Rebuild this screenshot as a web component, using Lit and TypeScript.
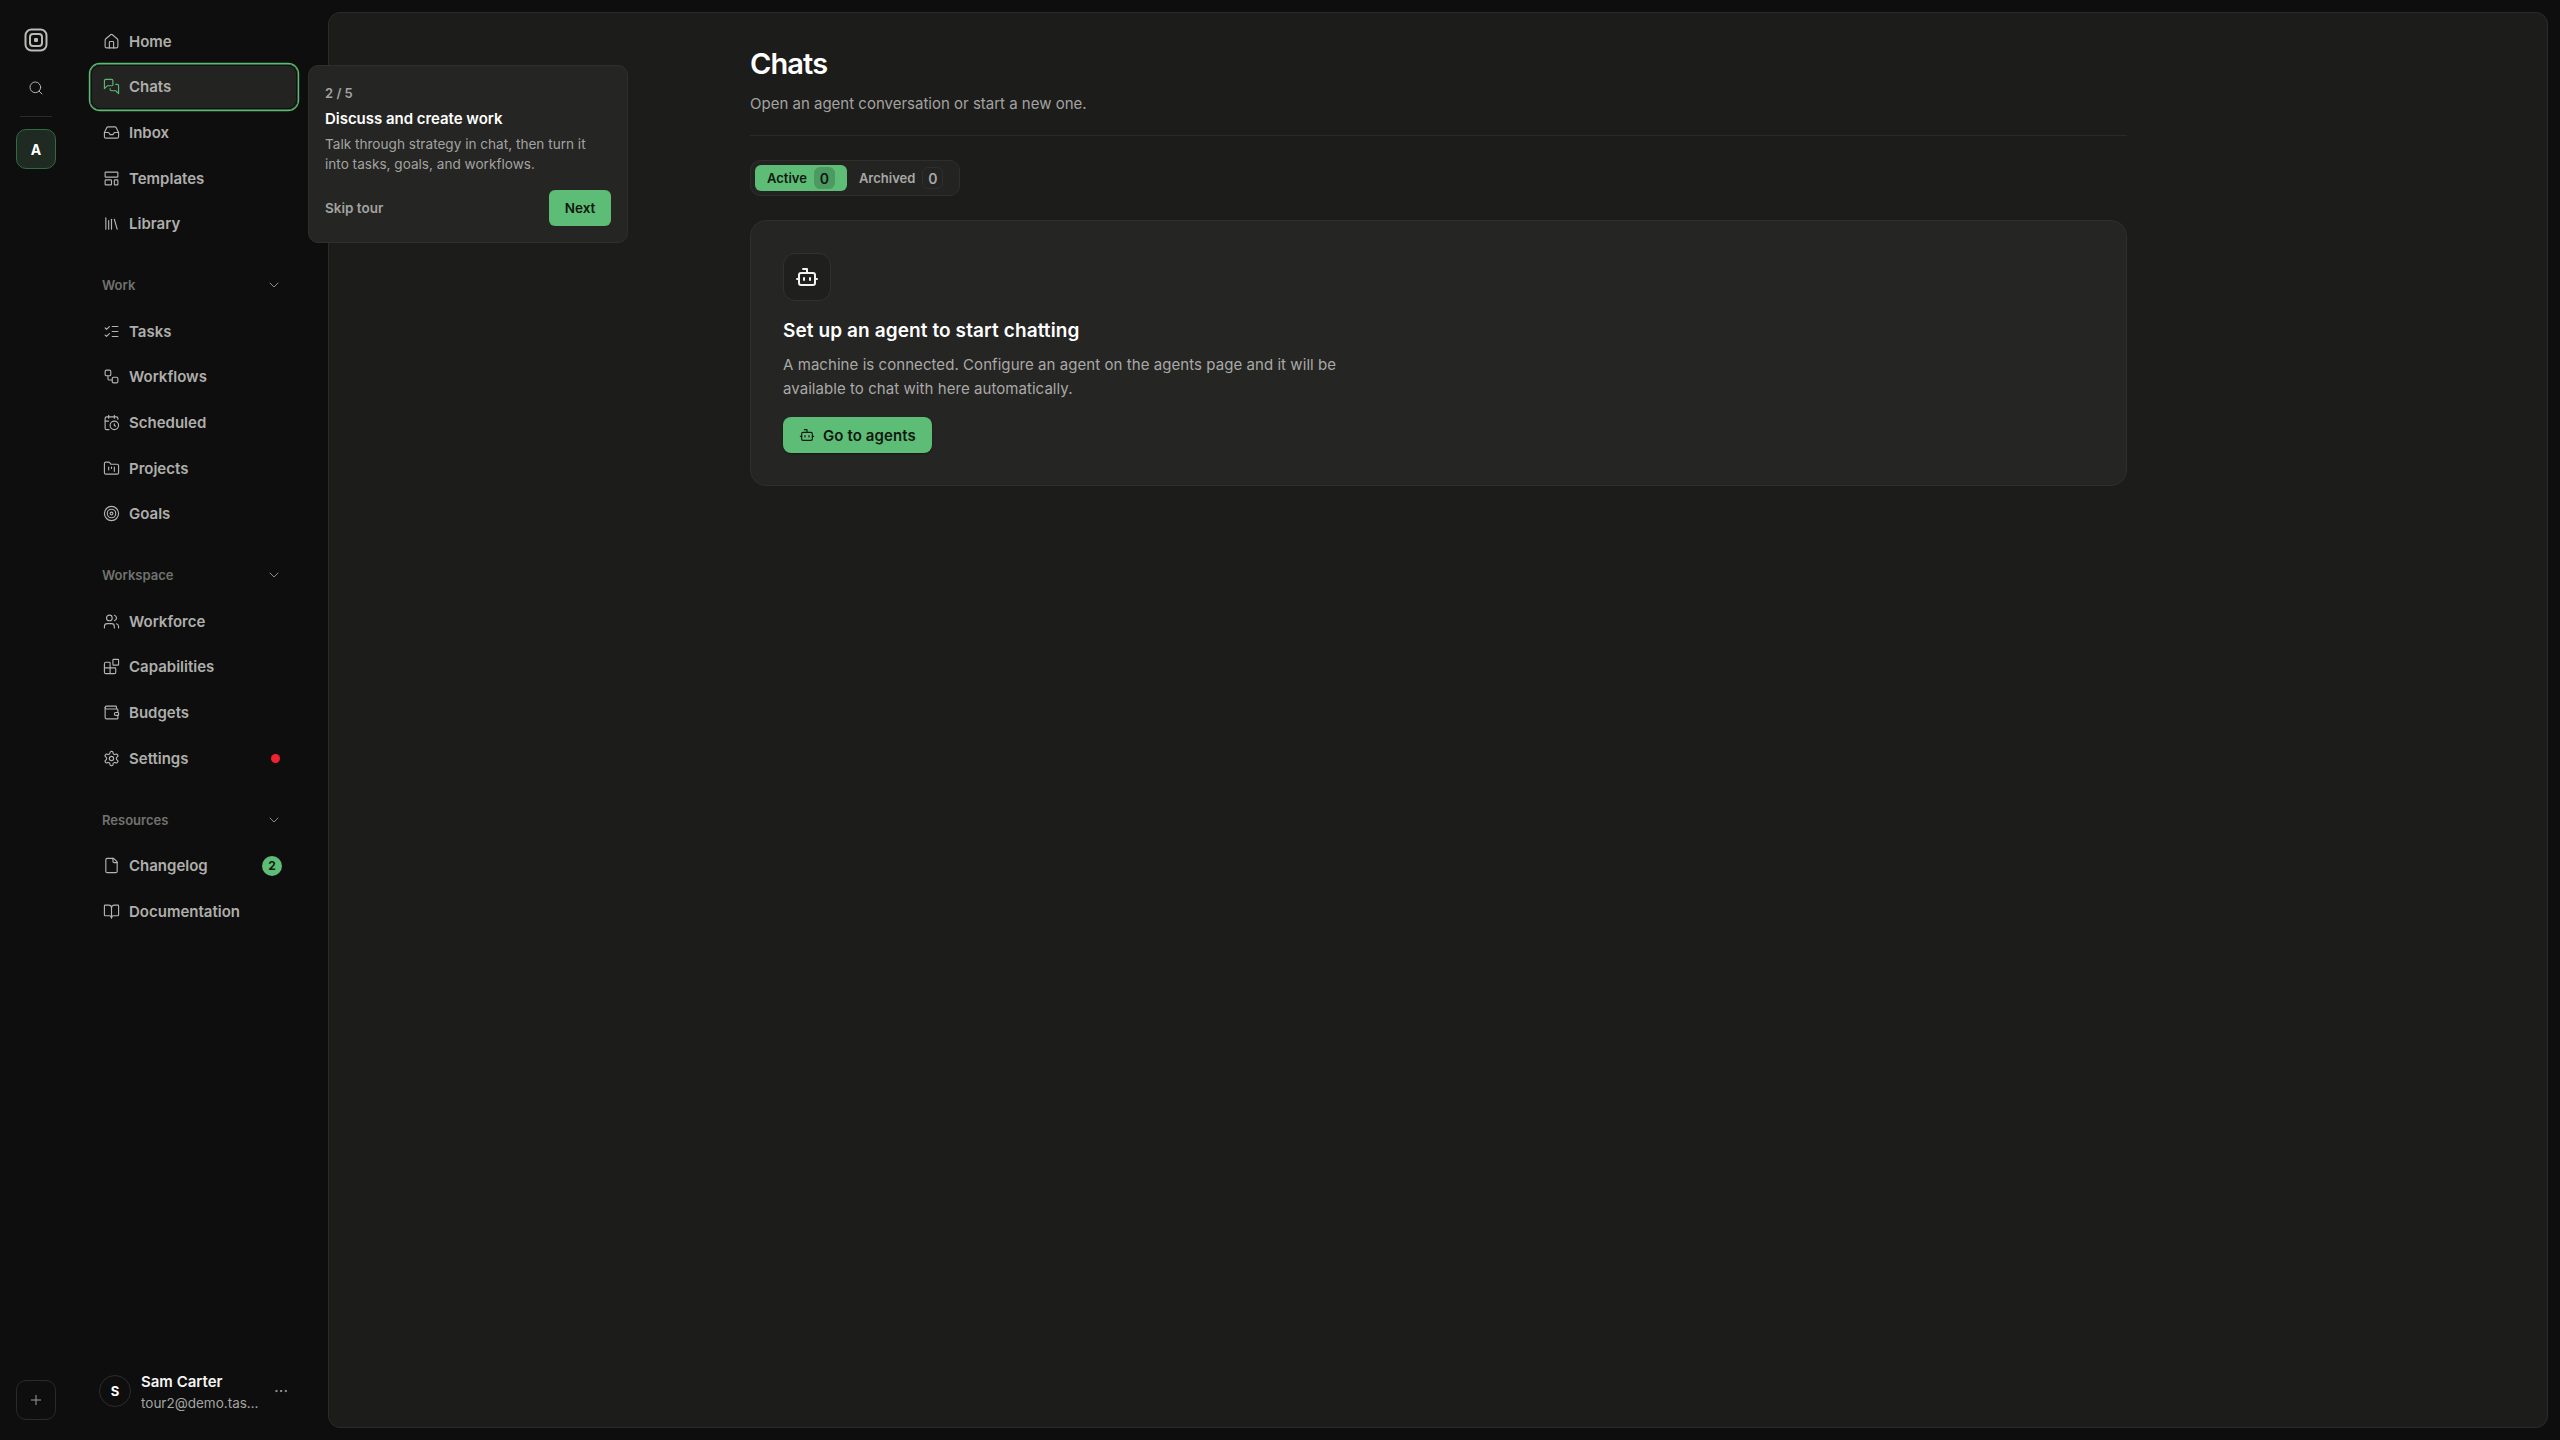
import { LitElement, html, svg, css } from 'lit';
import { customElement } from 'lit/decorators.js';

const icons: Record<string, unknown> = {
  home: svg`<path d="M15 21v-8a1 1 0 0 0-1-1h-4a1 1 0 0 0-1 1v8"/><path d="M3 10a2 2 0 0 1 .709-1.528l7-5.999a2 2 0 0 1 2.582 0l7 5.999A2 2 0 0 1 21 10v9a2 2 0 0 1-2 2H5a2 2 0 0 1-2-2z"/>`,
  chats: svg`<path d="M14 9a2 2 0 0 1-2 2H6l-4 4V4a2 2 0 0 1 2-2h8a2 2 0 0 1 2 2z"/><path d="M18 9h2a2 2 0 0 1 2 2v11l-4-4h-6a2 2 0 0 1-2-2v-1"/>`,
  inbox: svg`<polyline points="22 12 16 12 14 15 10 15 8 12 2 12"/><path d="M5.45 5.11 2 12v6a2 2 0 0 0 2 2h16a2 2 0 0 0 2-2v-6l-3.45-6.89A2 2 0 0 0 16.76 4H7.24a2 2 0 0 0-1.79 1.11z"/>`,
  templates: svg`<rect width="18" height="7" x="3" y="3" rx="1"/><rect width="9" height="7" x="3" y="14" rx="1"/><rect width="5" height="7" x="16" y="14" rx="1"/>`,
  library: svg`<path d="m16 6 4 14"/><path d="M12 6v14"/><path d="M8 8v12"/><path d="M4 4v16"/>`,
  tasks: svg`<path d="M13 5h8"/><path d="M13 12h8"/><path d="M13 19h8"/><path d="m3 17 2 2 4-4"/><path d="m3 7 2 2 4-4"/>`,
  workflows: svg`<rect width="8" height="8" x="3" y="3" rx="2"/><path d="M7 11v4a2 2 0 0 0 2 2h4"/><rect width="8" height="8" x="13" y="13" rx="2"/>`,
  scheduled: svg`<path d="M16 14v2.2l1.6 1"/><path d="M16 2v4"/><path d="M21 7.5V6a2 2 0 0 0-2-2H5a2 2 0 0 0-2 2v14a2 2 0 0 0 2 2h3.5"/><path d="M3 10h5"/><path d="M8 2v4"/><circle cx="16" cy="16" r="6"/>`,
  projects: svg`<path d="M4 20h16a2 2 0 0 0 2-2V8a2 2 0 0 0-2-2h-7.93a2 2 0 0 1-1.66-.9l-.82-1.2A2 2 0 0 0 7.93 3H4a2 2 0 0 0-2 2v13c0 1.1.9 2 2 2Z"/><path d="M8 10v4"/><path d="M12 10v2"/><path d="M16 10v6"/>`,
  goals: svg`<circle cx="12" cy="12" r="10"/><circle cx="12" cy="12" r="6"/><circle cx="12" cy="12" r="2"/>`,
  workforce: svg`<path d="M16 21v-2a4 4 0 0 0-4-4H6a4 4 0 0 0-4 4v2"/><circle cx="9" cy="7" r="4"/><path d="M22 21v-2a4 4 0 0 0-3-3.87"/><path d="M16 3.13a4 4 0 0 1 0 7.75"/>`,
  capabilities: svg`<path d="M10 22V7a1 1 0 0 0-1-1H4a2 2 0 0 0-2 2v12a2 2 0 0 0 2 2h12a2 2 0 0 0 2-2v-5a1 1 0 0 0-1-1H2"/><rect x="14" y="2" width="8" height="8" rx="1"/>`,
  budgets: svg`<path d="M19 7V4a1 1 0 0 0-1-1H5a2 2 0 0 0 0 4h15a1 1 0 0 1 1 1v4h-3a2 2 0 0 0 0 4h3a1 1 0 0 0 1-1v-2a1 1 0 0 0-1-1"/><path d="M3 5v14a2 2 0 0 0 2 2h15a1 1 0 0 0 1-1v-4"/>`,
  settings: svg`<path d="M12.22 2h-.44a2 2 0 0 0-2 2v.18a2 2 0 0 1-1 1.73l-.43.25a2 2 0 0 1-2 0l-.15-.08a2 2 0 0 0-2.73.73l-.22.38a2 2 0 0 0 .73 2.73l.15.1a2 2 0 0 1 1 1.72v.51a2 2 0 0 1-1 1.74l-.15.09a2 2 0 0 0-.73 2.73l.22.38a2 2 0 0 0 2.73.73l.15-.08a2 2 0 0 1 2 0l.43.25a2 2 0 0 1 1 1.73V20a2 2 0 0 0 2 2h.44a2 2 0 0 0 2-2v-.18a2 2 0 0 1 1-1.73l.43-.25a2 2 0 0 1 2 0l.15.08a2 2 0 0 0 2.73-.73l.22-.39a2 2 0 0 0-.73-2.73l-.15-.08a2 2 0 0 1-1-1.74v-.5a2 2 0 0 1 1-1.74l.15-.09a2 2 0 0 0 .73-2.73l-.22-.38a2 2 0 0 0-2.73-.73l-.15.08a2 2 0 0 1-2 0l-.43-.25a2 2 0 0 1-1-1.73V4a2 2 0 0 0-2-2z"/><circle cx="12" cy="12" r="3"/>`,
  changelog: svg`<path d="M15 2H6a2 2 0 0 0-2 2v16a2 2 0 0 0 2 2h12a2 2 0 0 0 2-2V7Z"/><path d="M14 2v4a2 2 0 0 0 2 2h4"/>`,
  documentation: svg`<path d="M12 7v14"/><path d="M3 18a1 1 0 0 1-1-1V4a1 1 0 0 1 1-1h5a4 4 0 0 1 4 4 4 4 0 0 1 4-4h5a1 1 0 0 1 1 1v13a1 1 0 0 1-1 1h-6a3 3 0 0 0-3 3 3 3 0 0 0-3-3z"/>`,
  bot: svg`<path d="M12 8V4H8"/><rect width="16" height="12" x="4" y="8" rx="2"/><path d="M2 14h2"/><path d="M20 14h2"/><path d="M15 13v2"/><path d="M9 13v2"/>`,
  search: svg`<circle cx="11" cy="11" r="8"/><path d="m21 21-4.3-4.3"/>`,
  chevron: svg`<path d="m6 9 6 6 6-6"/>`,
  plus: svg`<path d="M5 12h14"/><path d="M12 5v14"/>`,
  dots: svg`<circle cx="12" cy="12" r="1"/><circle cx="19" cy="12" r="1"/><circle cx="5" cy="12" r="1"/>`,
};

const icon = (name: string, size = 17, sw = 1.6) => html`<svg
  width=${size}
  height=${size}
  viewBox="0 0 24 24"
  fill="none"
  stroke="currentColor"
  stroke-width=${sw}
  stroke-linecap="round"
  stroke-linejoin="round"
>${icons[name]}</svg>`;

type NavItem = { label: string; icon: string; active?: boolean; dot?: boolean; badge?: string };

const topItems: NavItem[] = [
  { label: 'Home', icon: 'home' },
  { label: 'Chats', icon: 'chats', active: true },
  { label: 'Inbox', icon: 'inbox' },
  { label: 'Templates', icon: 'templates' },
  { label: 'Library', icon: 'library' },
];

const groups: { title: string; items: NavItem[] }[] = [
  {
    title: 'Work',
    items: [
      { label: 'Tasks', icon: 'tasks' },
      { label: 'Workflows', icon: 'workflows' },
      { label: 'Scheduled', icon: 'scheduled' },
      { label: 'Projects', icon: 'projects' },
      { label: 'Goals', icon: 'goals' },
    ],
  },
  {
    title: 'Workspace',
    items: [
      { label: 'Workforce', icon: 'workforce' },
      { label: 'Capabilities', icon: 'capabilities' },
      { label: 'Budgets', icon: 'budgets' },
      { label: 'Settings', icon: 'settings', dot: true },
    ],
  },
  {
    title: 'Resources',
    items: [
      { label: 'Changelog', icon: 'changelog', badge: '2' },
      { label: 'Documentation', icon: 'documentation' },
    ],
  },
];

@customElement('app-root')
export class AppRoot extends LitElement {
  static styles = css`
    :host {
      display: grid;
      grid-template-columns: 72px 256px 1fr;
      height: 1440px;
      background: #0e0e0e;
      color: #b4b4b2;
      font-family: Inter, 'Liberation Sans', sans-serif;
      position: relative;
      overflow: hidden;
    }

    .rail {
      display: flex;
      flex-direction: column;
      align-items: center;
      padding: 28px 0 20px;
    }
    .logo {
      width: 24px;
      height: 24px;
      color: #b9b9b6;
    }
    .rail-search {
      margin-top: 28px;
      height: 16px;
      color: #b4b4b2;
    }
    .rail-line {
      width: 32px;
      height: 1px;
      background: #2a2a2a;
      margin: 20px 0 12px;
    }
    .tile {
      width: 40px;
      height: 40px;
      box-sizing: border-box;
      border-radius: 10px;
      display: flex;
      align-items: center;
      justify-content: center;
    }
    .tile-a {
      background: #1e2a22;
      border: 1px solid #2f6a40;
      color: #fff;
      font-size: 14px;
      font-weight: 700;
    }
    .tile-add {
      margin-top: auto;
      border: 1px solid #2a2a2a;
      color: #9c9c9a;
    }

    .nav {
      display: flex;
      flex-direction: column;
      padding: 18.5px 30px 20px 18px;
    }
    .item {
      height: 45.6px;
      flex: none;
      box-sizing: border-box;
      display: flex;
      align-items: center;
      gap: 9px;
      padding: 0 14px 0 13px;
      border-radius: 10px;
      font-size: 15px;
      font-weight: 600;
      color: #aeaeac;
    }
    .item svg {
      flex: none;
      color: #b4b4b2;
    }
    .item.active {
      background: #232321;
      box-shadow: 0 0 0 1.2px #5cb974, inset 0 0 0 0.4px #5cb974, inset 0 0 0 2px #121212;
    }
    .item.active svg {
      color: #5cb974;
    }
    .item .dot {
      margin-left: auto;
      margin-right: 4.5px;
      width: 9px;
      height: 9px;
      border-radius: 50%;
      background: #f0222f;
    }
    .item .badge {
      margin-left: auto;
      margin-right: 2px;
      width: 20px;
      height: 20px;
      border-radius: 50%;
      background: #5dbd77;
      color: #10180f;
      font-size: 12px;
      font-weight: 700;
      display: flex;
      align-items: center;
      justify-content: center;
    }
    .group-title {
      margin-top: 16px;
      height: 46px;
      flex: none;
      display: flex;
      align-items: center;
      justify-content: space-between;
      padding: 0 16px 0 12px;
      font-size: 13px;
      font-weight: 600;
      color: #727270;
    }
    .group-title svg {
      color: #8b8b89;
    }

    .user {
      margin-top: auto;
      display: flex;
      align-items: center;
      gap: 10px;
      padding-left: 9px;
      margin-bottom: 8px;
    }
    .avatar {
      width: 32px;
      height: 32px;
      box-sizing: border-box;
      border-radius: 50%;
      border: 1px solid #2c2c2c;
      display: flex;
      align-items: center;
      justify-content: center;
      color: #fff;
      font-size: 13px;
      font-weight: 700;
      flex: none;
    }
    .who {
      width: 118px;
      display: flex;
      flex-direction: column;
      gap: 3px;
      padding-top: 3px;
    }
    .name {
      color: #f4f4f2;
      font-size: 15px;
      font-weight: 600;
      line-height: 18px;
    }
    .mail {
      color: #a4a4a2;
      font-size: 13.5px;
      line-height: 18px;
      white-space: nowrap;
      overflow: hidden;
      text-overflow: ellipsis;
    }
    .more {
      margin-left: 4px;
      height: 16px;
      color: #a4a4a2;
    }

    .panel {
      margin: 12px 12px 12px 0;
      background: #1c1c1a;
      border: 1px solid #2a2a28;
      border-radius: 12px;
      box-sizing: border-box;
      display: flex;
      justify-content: center;
      padding: 27px 0 0 1px;
    }
    .content {
      width: 1377px;
    }
    h1 {
      margin: 0;
      color: #fff;
      font-size: 29px;
      line-height: 47px;
      font-weight: 600;
      letter-spacing: -0.9px;
    }
    .sub {
      margin: 5px 0 0;
      font-size: 15px;
      line-height: 24px;
      color: #a3a3a1;
    }
    .rule {
      height: 1px;
      background: #2a2a28;
      margin-top: 19px;
    }
    .tabs {
      margin-top: 24px;
      display: inline-flex;
      align-items: center;
      gap: 12px;
      height: 36px;
      box-sizing: border-box;
      border: 1px solid #2e2e2c;
      background: #232321;
      border-radius: 10px;
      padding: 0 16px 0 4px;
      font-size: 13px;
      font-weight: 600;
    }
    .tab {
      display: flex;
      align-items: center;
      gap: 7px;
      height: 26px;
      color: #a8a8a6;
    }
    .tab.on {
      background: #5dbd77;
      color: #10180f;
      border-radius: 6px;
      padding: 0 12px;
    }
    .count {
      width: 21px;
      height: 22px;
      box-sizing: border-box;
      border-radius: 6px;
      border: 1px solid #2e2e2c;
      display: flex;
      align-items: center;
      justify-content: center;
      font-size: 14px;
    }
    .tab.on .count {
      background: #4c9a61;
      border-color: #4c9a61;
    }
    .card {
      margin-top: 24px;
      background: #252523;
      border: 1px solid #2f2f2d;
      border-radius: 16px;
      padding: 32px;
    }
    .card-icon {
      width: 48px;
      height: 48px;
      box-sizing: border-box;
      border: 1px solid #313130;
      background: #1f1f1d;
      border-radius: 12px;
      display: flex;
      align-items: center;
      justify-content: center;
      color: #f2f2f0;
    }
    .card h2 {
      margin: 16px 0 0;
      color: #fff;
      font-size: 19px;
      line-height: 28px;
      font-weight: 600;
      letter-spacing: 0.1px;
    }
    .card p {
      margin: 8px 0 0;
      width: 570px;
      font-size: 15px;
      line-height: 24px;
      color: #a9a9a7;
      letter-spacing: 0.06px;
    }
    .cta {
      margin-top: 16px;
      display: inline-flex;
      align-items: center;
      gap: 8px;
      height: 36px;
      padding: 0 16px;
      border-radius: 8px;
      background: #5dbd77;
      color: #10180f;
      font-size: 15px;
      font-weight: 600;
      letter-spacing: 0.1px;
      box-shadow: 0 1px 2px rgba(0, 0, 0, 0.4);
    }

    .tour {
      position: absolute;
      left: 308px;
      top: 65px;
      width: 320px;
      height: 178px;
      box-sizing: border-box;
      padding: 17px 16px 16px;
      background: #252523;
      border: 1px solid #2f2f2d;
      border-radius: 10px;
      display: flex;
      flex-direction: column;
    }
    .step {
      font-size: 13px;
      line-height: 20px;
      font-weight: 600;
      color: #a3a3a1;
    }
    .tour h3 {
      margin: 5px 0 0;
      color: #fff;
      font-size: 15px;
      line-height: 22px;
      font-weight: 600;
      letter-spacing: -0.03px;
    }
    .tour p {
      margin: 4px 0 0;
      width: 280px;
      font-size: 13.6px;
      line-height: 20px;
      color: #a3a3a1;
    }
    .tour-foot {
      margin-top: auto;
      display: flex;
      align-items: center;
      justify-content: space-between;
      font-size: 13.5px;
      font-weight: 600;
      color: #a3a3a1;
    }
    .next {
      width: 62px;
      height: 36px;
      border-radius: 6px;
      background: #5dbd77;
      color: #10180f;
      display: flex;
      align-items: center;
      justify-content: center;
    }
  `;

  renderItem(item: NavItem) {
    return html`<div class="item ${item.active ? 'active' : ''}">
      ${icon(item.icon)}
      <span>${item.label}</span>
      ${item.dot ? html`<span class="dot"></span>` : ''}
      ${item.badge ? html`<span class="badge">${item.badge}</span>` : ''}
    </div>`;
  }

  render() {
    return html`
      <div class="rail">
        <svg class="logo" viewBox="0 0 24 24" fill="none" stroke="currentColor" stroke-width="2">
          <rect x="1.5" y="1.5" width="21" height="21" rx="6" />
          <rect x="6" y="6" width="12" height="12" rx="3" />
          <rect x="10" y="10" width="4" height="4" rx="1" fill="currentColor" stroke="none" />
        </svg>
        <div class="rail-search">${icon('search', 16, 1.5)}</div>
        <div class="rail-line"></div>
        <div class="tile tile-a">A</div>
        <div class="tile tile-add">${icon('plus', 16, 1.5)}</div>
      </div>

      <nav class="nav">
        ${topItems.map((i) => this.renderItem(i))}
        ${groups.map(
          (g) => html`
            <div class="group-title"><span>${g.title}</span>${icon('chevron', 16, 1.5)}</div>
            ${g.items.map((i) => this.renderItem(i))}
          `,
        )}
        <div class="user">
          <div class="avatar">S</div>
          <div class="who">
            <span class="name">Sam Carter</span>
            <span class="mail">tour2@demo.taskforce.sh</span>
          </div>
          <div class="more">${icon('dots', 16, 1.5)}</div>
        </div>
      </nav>

      <main class="panel">
        <div class="content">
          <h1>Chats</h1>
          <div class="sub">Open an agent conversation or start a new one.</div>
          <div class="rule"></div>
          <div class="tabs">
            <div class="tab on">Active <span class="count">0</span></div>
            <div class="tab">Archived <span class="count">0</span></div>
          </div>
          <section class="card">
            <div class="card-icon">${icon('bot', 24, 2)}</div>
            <h2>Set up an agent to start chatting</h2>
            <p>
              A machine is connected. Configure an agent on the agents page and it will be
              available to chat with here automatically.
            </p>
            <div class="cta">${icon('bot', 16, 1.75)} Go to agents</div>
          </section>
        </div>
      </main>

      <aside class="tour">
        <div class="step">2 / 5</div>
        <h3>Discuss and create work</h3>
        <p>Talk through strategy in chat, then turn it into tasks, goals, and workflows.</p>
        <div class="tour-foot">
          <span>Skip tour</span>
          <span class="next">Next</span>
        </div>
      </aside>
    `;
  }
}
